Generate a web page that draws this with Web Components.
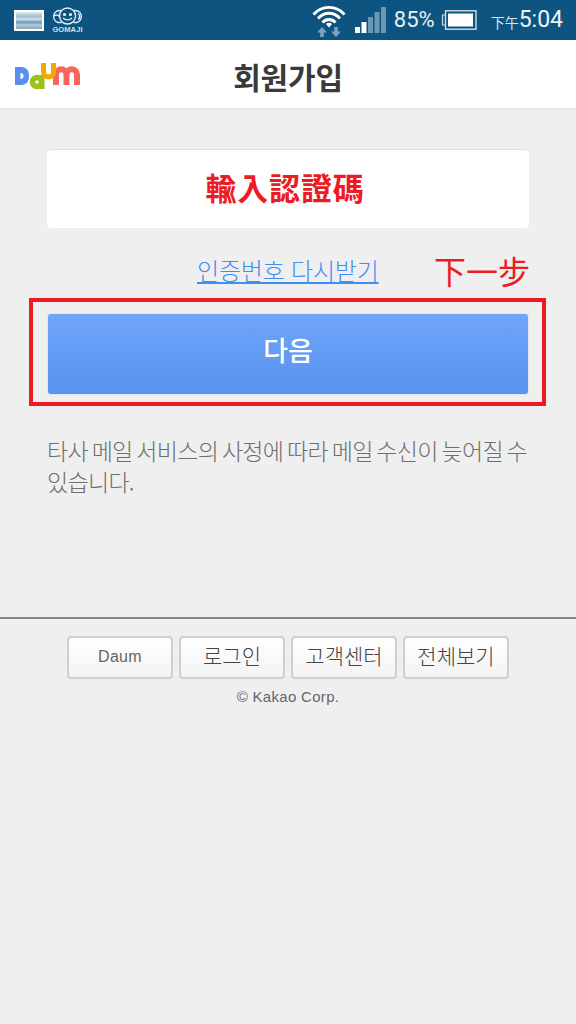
<!DOCTYPE html>
<html lang="ko"><head><meta charset="utf-8"><title>회원가입</title>
<style>
html,body{margin:0;padding:0;background:#efefef;}
body{width:576px;height:1024px;overflow:hidden;font-family:"Noto Sans CJK KR","Noto Sans",sans-serif;}
</style></head>
<body>
<status-bar></status-bar>
<app-header title-text="회원가입"></app-header>
<main-panel>
  <code-card>輸入認證碼</code-card>
  <resend-row link="인증번호 다시받기" note="下一步"></resend-row>
  <next-button>다음</next-button>
  <info-note>타사 메일 서비스의 사정에 따라 메일 수신이 늦어질 수 있습니다.</info-note>
</main-panel>
<page-footer>
  <foot-button latin>Daum</foot-button>
  <foot-button>로그인</foot-button>
  <foot-button>고객센터</foot-button>
  <foot-button>전체보기</foot-button>
</page-footer>
<script>
function def(name,html,init){
  customElements.define(name,class extends HTMLElement{
    constructor(){super();this.attachShadow({mode:'open'}).innerHTML=html;}
    connectedCallback(){if(init)init(this);}
  });
}
def('status-bar',`<style>
:host{display:flex;align-items:center;height:40px;background:#0d5480;color:#fff;box-sizing:border-box;font-family:Roboto,"Liberation Sans",sans-serif;}
.left{display:flex;align-items:center;gap:6px;margin-left:14px;flex:1}
.pic{width:30px;height:21px;box-sizing:border-box;border:2px solid #fff;background:linear-gradient(#dfeaf0 0,#9dbccd 28%,#d3e2ea 42%,#6f98b2 60%,#b2cbd8 76%,#86a9bf 100%);}
.go{display:flex;flex-direction:column;align-items:center;width:35px}
.go svg{display:block}
.go span{font:700 7.500px/7px "Liberation Sans",sans-serif;color:#d2e0e9;letter-spacing:.1px}
.right{display:flex;align-items:center}
.wifi{margin-right:9px}
.sig{margin-right:8px}
.pct{font-size:22px;line-height:40px;color:#e8f0f5;margin-right:6px}
.bat{margin-right:14px}
.ap{font:14px/40px "Noto Sans CJK TC",sans-serif;color:#dbe7ee;margin-top:3px}
.time{font-size:23px;line-height:40px;margin-right:13px;color:#eef4f7}
</style>
<div class="left"><div class="pic"></div>
<div class="go"><svg width="35" height="19" viewBox="0 0 35 19" fill="none" stroke="#e4edf2" stroke-width="1.400"><circle cx="17.500" cy="9" r="8"/><path d="M11.500 3.700A6 6 0 1 0 8 15.500h3.500M23.500 3.700A6 6 0 1 1 27 15.500h-3.500M3.500 9.500c1.500-2 4.500-2 6 0M28 6.500c2.200 1.500 2.200 4.500 0 6"/><circle cx="14.500" cy="7.500" r=".9" fill="#e4edf2"/><circle cx="20.500" cy="7.500" r=".9" fill="#e4edf2"/><path d="M13 11c2.500 2.500 6.500 2.500 9 0"/></svg><span>GOMAJI</span></div></div>
<div class="right">
<svg class="wifi" width="34" height="36" viewBox="0 0 34 36" fill="none"><g stroke="#fff" stroke-width="2.800"><path d="M1.500 12.500C9.500 3 24.500 3 32.500 12.500"/><path d="M6 16.500c6-7 16-7 22 0"/><path d="M10.500 20.500c3.500-4 9.500-4 13 0"/></g><path d="M14 22l3 3.500 3-3.500a4 4 0 0 0-6 0z" fill="#fff"/><path d="M10 25l-5 5.500h3.200V35h3.600v-4.500H15zM24 35l5-5.500h-3.200V25h-3.600v4.500H19z" fill="#7ba3bb"/></svg>
<svg class="sig" width="31" height="26" viewBox="0 0 31 26"><rect x="0" y="20" width="5" height="6" fill="#fff"/><rect x="6.500" y="15" width="5" height="11" fill="#fff"/><rect x="13" y="10" width="5" height="16" fill="#6a97b2"/><rect x="19.500" y="5" width="5" height="21" fill="#6a97b2"/><rect x="26" y="0" width="5" height="26" fill="#6a97b2"/></svg>
<span class="pct">85%</span>
<svg class="bat" width="36" height="20" viewBox="0 0 36 20"><path d="M4 5H1.500v10H4" fill="none" stroke="#cfdfe8" stroke-width="1.200"/><rect x="4.500" y=".8" width="30.500" height="18.400" fill="none" stroke="#cfdfe8" stroke-width="1.400"/><rect x="7" y="3.500" width="25" height="13" fill="#fff"/></svg>
<span class="ap">下午</span><span class="time">5:04</span>
</div>`);
def('app-header',`<style>
:host{display:flex;align-items:center;position:relative;height:70px;background:#fff;box-sizing:border-box;border-bottom:2px solid #e6e6e6;}
svg{margin:5px 0 0 15px;display:block;flex:none}
h1{position:absolute;left:0;right:0;top:1px;margin:0;text-align:center;font:700 30px/70px "Noto Sans CJK KR",sans-serif;color:#3a3a3a;letter-spacing:-.2px}
</style><svg width="65" height="27" viewBox="0 0 65 27" fill="none">
<path fill-rule="evenodd" d="M0 4h6.500c5 0 7.500 3.500 7.500 9s-2.500 9-7.500 9H0zM5.500 10v6c2 0 3-1 3-3s-1-3-3-3z" fill="#5b8fee"/>
<circle cx="22" cy="19" r="4.500" stroke="#9cc21a" stroke-width="5.500"/><path d="M27 12v14" stroke="#9cc21a" stroke-width="5"/>
<path d="M41 22V11.500a5 5 0 0 1 10.500 0V22M51.500 11.500a5 5 0 0 1 10.500 0V22" stroke="#f8665e" stroke-width="6"/>
<path d="M28.500 0v9a5 5 0 0 0 10 0V0" stroke="#f5a800" stroke-width="5"/></svg>
<h1></h1>`,el=>{el.shadowRoot.querySelector('h1').textContent=el.getAttribute('title-text');});
def('main-panel',`<style>:host{display:block;height:509px;box-sizing:border-box;padding-top:40px;border-bottom:2px solid #868686;}</style><slot></slot>`);
def('code-card',`<style>
:host{display:block;width:482px;height:78px;margin-left:47px;box-sizing:border-box;padding-right:6px;background:#fff;border-radius:4px;box-shadow:0 -1px 1px rgba(0,0,0,.07);text-align:center;color:#ed1c24;font:700 31px/74px "Noto Sans CJK TC",sans-serif;letter-spacing:.8px}
</style><slot></slot>`);
def('resend-row',`<style>
:host{display:flex;height:70px;box-sizing:border-box;align-items:center;}
a{margin:14px 0 0 197px;width:182px;color:#3f8ef2;font:24px/30px "Noto Sans CJK KR",sans-serif;letter-spacing:-.2px;text-decoration:underline;text-underline-offset:2px;white-space:nowrap;font-weight:300}
span{margin:13px 0 0 55px;color:#ed1c24;font:32px/40px "Noto Sans CJK TC",sans-serif;}
</style><a href="#"></a><span></span>`,el=>{const s=el.shadowRoot;s.querySelector('a').textContent=el.getAttribute('link');s.querySelector('span').textContent=el.getAttribute('note');});
def('next-button',`<style>
:host{display:block;width:517px;height:108px;margin-left:29px;box-sizing:border-box;border:4px solid #ed1c24;padding:12px 0 0 15px;}
div{width:480px;height:80px;border-radius:3px;background:linear-gradient(#6fa5fa,#5891ef);box-shadow:0 0 1px rgba(60,100,170,.6);color:#fff;text-align:center;font:500 27px/72px "Noto Sans CJK KR",sans-serif;}
</style><div><slot></slot></div>`);
def('info-note',`<style>
:host{display:block;margin:29px 47px 0;color:#6e6e6e;font:300 23px/31px "Noto Sans CJK KR",sans-serif;letter-spacing:-.7px;word-spacing:-2px}
</style><slot></slot>`);
def('page-footer',`<style>
:host{display:block;padding-top:17px;text-align:center}
.row{display:flex;gap:6px;padding-left:67px}
p{margin:9px 0 0;color:#666;font:15px/18px "Liberation Sans",sans-serif;letter-spacing:.3px}
</style><div class="row"><slot></slot></div><p>© Kakao Corp.</p>`);
def('foot-button',`<style>
:host{display:block;width:106px;height:43px;box-sizing:border-box;border:2px solid #cfcfcf;border-radius:4px;background:linear-gradient(#fff,#f3f3f3);color:#444;text-align:center;font:21px/35px "Noto Sans CJK KR",sans-serif;font-weight:300}
:host([latin]){font:16px/38px "Liberation Sans",sans-serif;color:#666;letter-spacing:.3px}
</style><slot></slot>`);
</script>
</body></html>
